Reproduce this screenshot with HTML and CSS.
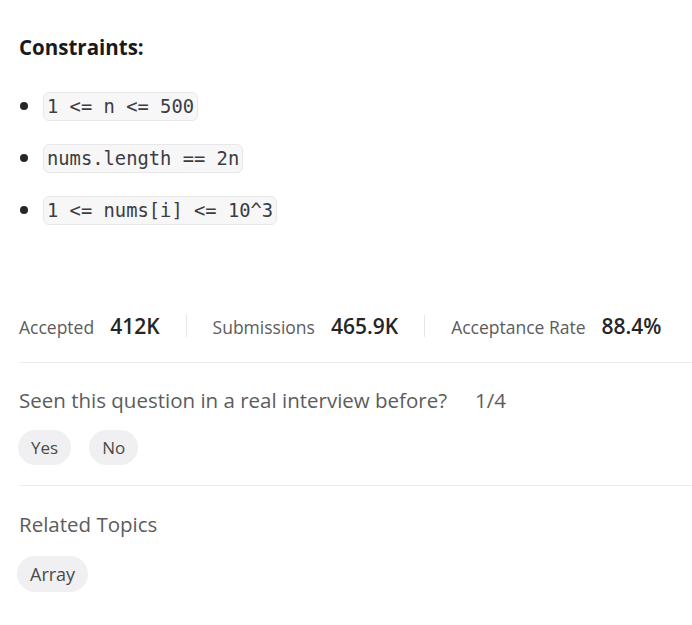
FILE: index.html
```html
<!DOCTYPE html>
<html>
<head>
<meta charset="utf-8">
<link rel="stylesheet" href="styles.css">
</head>
<body>
<div class="page">
  <h3 class="heading">Constraints:</h3>
  <ul class="constraints">
    <li><code>1 &lt;= n &lt;= 500</code></li>
    <li><code>nums.length == 2n</code></li>
    <li><code>1 &lt;= nums[i] &lt;= 10^3</code></li>
  </ul>

  <div class="stats">
    <div class="stat"><span class="label">Accepted</span><span class="value">412K</span></div>
    <div class="sep"></div>
    <div class="stat"><span class="label">Submissions</span><span class="value">465.9K</span></div>
    <div class="sep"></div>
    <div class="stat"><span class="label">Acceptance Rate</span><span class="value">88.4%</span></div>
  </div>

  <div class="section interview">
    <div class="question"><span>Seen this question in a real interview before?</span><span class="ratio">1/4</span></div>
    <div class="chips">
      <span class="chip">Yes</span>
      <span class="chip">No</span>
    </div>
  </div>

  <div class="section topics">
    <div class="title">Related Topics</div>
    <div class="chips">
      <span class="chip">Array</span>
    </div>
  </div>
</div>
</body>
</html>
```

FILE: styles.css
```css
* { box-sizing: border-box; }
html, body { margin: 0; padding: 0; background: #fff; }
body {
  font-family: "Open Sans", "Noto Sans", sans-serif;
  color: #262626;
}
.page {
  padding: 29px 0 0 19px;
}
.heading {
  margin: 0;
  font-size: 20.5px;
  line-height: 36px;
  font-weight: 700;
  color: #1a1a1a;
}
.constraints {
  list-style: none;
  margin: 27px 0 0 0;
  padding: 0;
  display: flex;
  flex-direction: column;
  gap: 23px;
}
.constraints li {
  position: relative;
  padding-left: 24px;
  height: 29px;
  display: flex;
  align-items: center;
}
.constraints li::before {
  content: "";
  position: absolute;
  left: 1px;
  top: 10px;
  width: 8px;
  height: 8px;
  border-radius: 50%;
  background: #262626;
}
code {
  font-family: "DejaVu Sans Mono", "Liberation Mono", monospace;
  font-size: 18.8px;
  line-height: 27px;
  padding: 0 3px;
  background: #f7f7f8;
  border: 1px solid #e8e8ea;
  border-radius: 6px;
  color: #3c3c43;
}
.stats {
  margin-top: 89px;
  display: flex;
  align-items: center;
  height: 24px;
}
.stat {
  display: flex;
  align-items: baseline;
  gap: 16px;
}
.label {
  font-size: 17.5px;
  color: #5c5c5c;
}
.value {
  font-size: 21px;
  font-weight: 600;
  color: #262626;
}
.sep {
  width: 1px;
  height: 22px;
  background: #e6e6e6;
  margin: 0 26px;
}
.section {
  border-top: 1px solid #ececec;
}
.interview {
  margin-top: 24px;
  padding-top: 22px;
}
.topics {
  margin-top: 20px;
  padding-top: 23px;
}
.question, .title {
  font-size: 20.5px;
  line-height: 30px;
  color: #5c5c5c;
  display: flex;
  gap: 28px;
}
.chips {
  display: flex;
  gap: 18px;
  margin-top: 15px;
  margin-left: -1px;
}
.topics .chips {
  margin-top: 17px;
  margin-left: -2px;
}
.chip {
  display: inline-flex;
  align-items: center;
  height: 35px;
  padding: 0 13px;
  border-radius: 18px;
  background: #f0f0f2;
  font-size: 17px;
  color: #4a4a4a;
}
.topics .chip {
  height: 36px;
  font-size: 18px;
}
```
